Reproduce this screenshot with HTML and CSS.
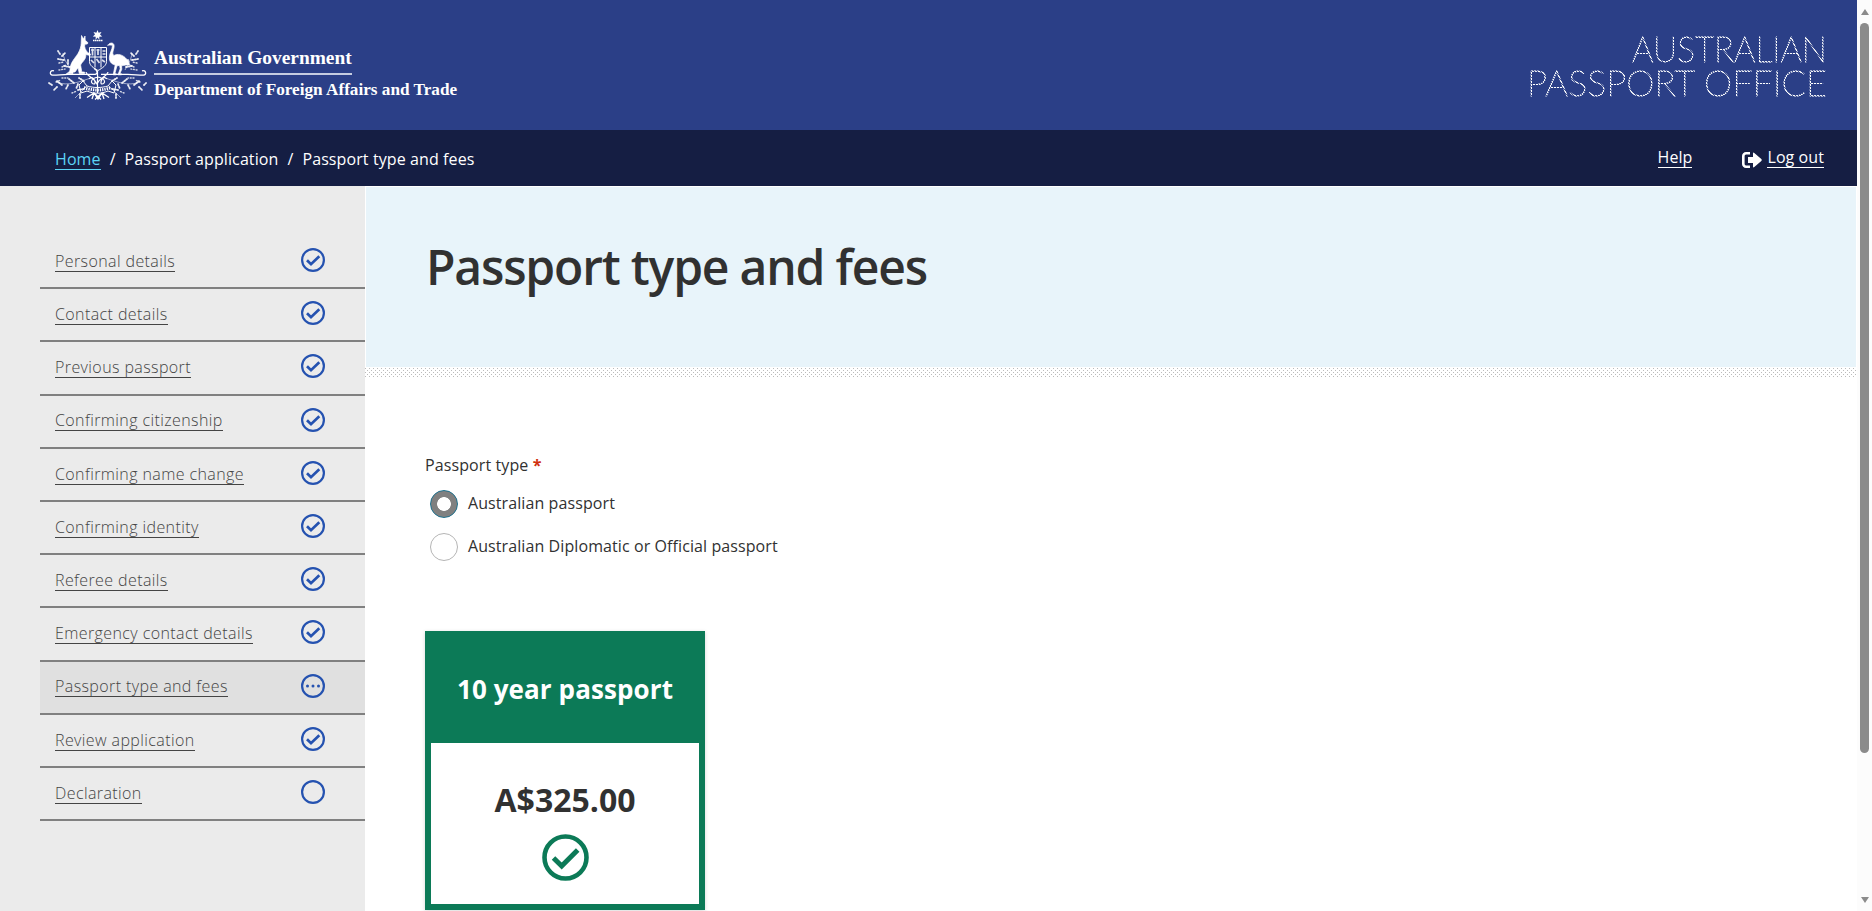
FILE: index.html
```html
<!DOCTYPE html>
<html lang="en">
<head>
<meta charset="utf-8">
<title>Passport type and fees</title>
<link rel="stylesheet" href="styles.css">
</head>
<body>
<svg class="defs" width="0" height="0" aria-hidden="true">
  <symbol id="done" viewBox="0 0 24 24"><circle cx="12" cy="12" r="10.9"/><path stroke-width="2.700" d="M6 12.200l4 4 8.300-8"/></symbol>
  <symbol id="todo" viewBox="0 0 24 24"><circle cx="12" cy="12" r="10.9"/></symbol>
  <symbol id="doing" viewBox="0 0 24 24"><circle cx="12" cy="12" r="10.9"/><g fill="currentColor" stroke="none"><circle cx="6.5" cy="12" r="1.5"/><circle cx="12" cy="12" r="1.5"/><circle cx="17.5" cy="12" r="1.5"/></g></symbol>
</svg>
<div class="page">
  <header class="banner">
    <div class="crest-group">
      <svg class="crest" viewBox="0 0 105 80" width="105" height="80" fill="none" stroke="#fff">
        <path fill="#fff" stroke="none" d="M52.500 5l1.100 2.700 2.900-.6-1.500 2.500 2.200 1.900-2.900.3.100 2.900-1.900-2.200-1.900 2.200.1-2.900-2.900-.3 2.200-1.900-1.500-2.500 2.900.6z"/>
        <path d="M48 15.600h9.500" stroke-width="1.500" stroke-dasharray="1.600 .4"/>
        <path fill="#fff" stroke="#fff" stroke-width=".7" d="M36.500 10.500l2 3.500 1.500-3 .2 4.200 2.800 2.600-.7 1.200-2.500.2c-.8 3.200 1 5.800 2.800 8.300l3 1.600-.5 1.400-4.300-1c.5 5-3.500 7-5.200 10.500l1.200 7h2.700v1.500h-5.200l-1.300-5.800-3 4.300h-2v1.500H21.500c2.300-1 3.600-2 3.800-5.500.4-6 5-10 7.700-14.500 2-3.400 3.100-7 3.200-10.300z"/>
        <path fill="#fff" stroke="#fff" stroke-width=".7" d="M62.500 20.300c1.300-.1 1.400-2.400 4-2.300 2.800.2 3 3 2.300 5.500-.8 3.300-1.900 5.600.2 7 3.500-2.300 9-.8 12.500 3.500 2 2.400 3.200 4.700 3 6.200-3.500-.6-5 .3-8 .6l.3 3.400-2 4.600h1.700v1h-3.500l2.200-6-.6-3.400-2.600.4-2.200 8h1.400v1h-3l2-9.800c-4-1-6-3.600-5.800-7.700.1-4.200 3-8 3-11.300 0-1.200-1.700-1-4.900-.7z"/>
        <path d="M44.500 22.500h17v14c0 4-4 6.500-8.500 9-4.500-2.500-8.500-5-8.500-9zM50 22.500v20M56 22.500v20M44.500 32h17" stroke-width="1"/>
        <path d="M46 25h3m-1.500-1.500v7M51.500 25h3m-1.500-1v6M57.500 26h3M57.500 29h3M46 35l3 3m2.500-4l3 4m2.500-3l3 2" stroke-width="1.700" opacity=".85"/>
        <path d="M9 45.800c-4-1.200-5 4-1.500 4.400C12 50.400 17 49.300 23 49.300h27c3-.3 3-4-1-6m7 6h27c6 0 11 1.100 15.500.9 3.500-.4 2.500-5.600-1.500-4.400" stroke-width="1.300"/>
        <path d="M26 45c-3-6-7-9-8-17M80 45c3-6 6-9 7-17M46 53c-10 3-23 9-35 4M60 53c10 3 23 9 35 4M42 61c-5 5-9 9-12 12M64 61c5 5 9 9 12 12" stroke-width=".7" opacity=".8"/>
        <path d="M25 42l-6-1m4-2v-5m-4 1l-6-1m4-3l3-3m-5 1l-2-3M81 42l6-1m-4-2v-5m4 1l6-1m-4-3l-3-3m5 1l2-3M39 56l-5-3m-1 6l-2 5m-2-6l-5-4m-1 6l-2 4m-4-4l-5-4m0 6l-3 3m-2-5l-3-2M67 56l5-3m1 6l2 5m2-6l5-4m1 6l2 4m4-4l5-4m0 6l3 3m2-5l2-2M39 64l-6 1m2 4v5M67 64l6 1m-2 4v5" stroke-width="1.800" stroke-linecap="round" stroke-dasharray="1.300 1.500" opacity=".9"/>
        <path d="M14 38l5-1m-2 5l4-2m-7 5l6-1M92 38l-5-1m2 5l-4-2m7 5l-6-1M17 53l6 0m-12 4l5-2M89 53l-6 0m12 4l-5-2M27 68l5-2m47 2l-5-2" stroke-width="1.400" stroke-linecap="round" stroke-dasharray="1 1.800" opacity=".8"/>
        <path d="M41 47c1 5 8 5 11 12 3-7 10-7 11-12M52.500 46v22M44 54c4-5 8 5 5 5s-5-5 4-7c9 2 7 7 4 7s1-10 5-5" stroke-width="1.200"/>
        <path d="M34 60l4-4 4 5c7 2 14 2 21 0l4-5 4 4-2 8-6-2c-7 3-14 3-21 0l-6 2z" stroke-width="1"/>
        <path d="M39 62.500l3 1c7 2 14 2 21 0l3-1" stroke-width="3" stroke-dasharray="1.300 1"/>
        <path d="M42 72.500l7-4.500 4 6 4-6 7 4.500M47 74l2-6 7 6.500m3-.5l-2-6-7 6.500" stroke-width="1.300"/>
      </svg>
      <div class="dept"><span class="gov">Australian Government</span><span class="dfat">Department of Foreign Affairs and Trade</span></div>
    </div>
    <svg class="office" width="308" height="96" viewBox="0 0 308 96" role="img">
      <text x="105" y="50" textLength="195" lengthAdjust="spacingAndGlyphs">AUSTRALIAN</text>
      <text x="0" y="83.500" textLength="300" lengthAdjust="spacingAndGlyphs">PASSPORT OFFICE</text>
    </svg>
  </header>
  <nav class="crumbs">
    <div class="trail"><a href="#">Home</a><span>/</span><span>Passport application</span><span>/</span><span>Passport type and fees</span></div>
    <div class="tools"><a href="#">Help</a><span class="logout"><svg width="20" height="16" viewBox="0 0 20 16"><path d="M8 1.300H4A2.700 2.700 0 0 0 1.300 4v8A2.700 2.700 0 0 0 4 14.700h4" fill="none" stroke="#fff" stroke-width="2.600"/><path d="M6 5h5V1.500Q11 0 12.300 1l7 6q.9 1 0 2l-7 6Q11 16 11 14.500V11H6z" fill="#fff"/></svg><a href="#">Log out</a></span></div>
  </nav>
  <div class="columns">
    <aside class="side">
      <ul class="steps">
        <li><a href="#">Personal details</a><svg><use href="#done"/></svg></li>
        <li><a href="#">Contact details</a><svg><use href="#done"/></svg></li>
        <li><a href="#">Previous passport</a><svg><use href="#done"/></svg></li>
        <li><a href="#">Confirming citizenship</a><svg><use href="#done"/></svg></li>
        <li><a href="#">Confirming name change</a><svg><use href="#done"/></svg></li>
        <li><a href="#">Confirming identity</a><svg><use href="#done"/></svg></li>
        <li><a href="#">Referee details</a><svg><use href="#done"/></svg></li>
        <li><a href="#">Emergency contact details</a><svg><use href="#done"/></svg></li>
        <li class="current"><a href="#">Passport type and fees</a><svg><use href="#doing"/></svg></li>
        <li><a href="#">Review application</a><svg><use href="#done"/></svg></li>
        <li><a href="#">Declaration</a><svg><use href="#todo"/></svg></li>
      </ul>
    </aside>
    <main class="main">
      <div class="hero"><h1>Passport type and fees</h1></div>
      <div class="dots"></div>
      <form class="form">
        <div class="legend">Passport type <b>*</b></div>
        <label class="option"><span class="radio on"></span>Australian passport</label>
        <label class="option"><span class="radio"></span>Australian Diplomatic or Official passport</label>
        <div class="card">
          <h2>10 year passport</h2>
          <div class="price"><strong>A$325.00</strong>
            <svg width="47" height="47" viewBox="0 0 47 47" fill="none" stroke="#0c7a57"><circle cx="23.500" cy="23.500" r="21" stroke-width="4.600"/><path d="M11.500 24l8.200 8 16-16" stroke-width="5"/></svg>
          </div>
        </div>
      </form>
    </main>
  </div>
</div>
<div class="scroll"><i class="up"></i><i class="thumb"></i><i class="down"></i></div>
</body>
</html>
```
FILE: styles.css
```css
* { box-sizing: border-box; }
body { margin: 0; display: flex; width: 1872px; height: 911px; overflow: hidden; background: #fff; color: #313131; font-family: "Open Sans", sans-serif; font-size: 16px; }
.defs { position: absolute; }
.page { width: 1857px; height: 911px; display: flex; flex-direction: column; }

.banner { height: 130px; flex: none; background: #2b3f87; display: flex; justify-content: space-between; padding: 12px 22px 0 45px; }
.crest-group { display: flex; padding-top: 13px; }
.dept { padding-top: 22px; margin-left: 4px; color: #fff; font-family: "Liberation Serif", serif; font-weight: 700; white-space: nowrap; display: flex; flex-direction: column; align-items: flex-start; }
.gov { font-size: 19.400px; line-height: 22px; height: 28px; border-bottom: 2px solid #c5cce0; }
.dfat { font-size: 17.200px; line-height: 20px; padding-top: 5px; }
.office { fill: #fff; stroke: #fff; stroke-width: .8; font-family: Lato, sans-serif; font-weight: 100; font-size: 36px; -webkit-mask: repeating-linear-gradient(45deg, #000 0 1.100px, rgba(0,0,0,.12) 1.100px 2.121px); mask: repeating-linear-gradient(45deg, #000 0 1.100px, rgba(0,0,0,.12) 1.100px 2.121px); }

.crumbs { height: 56px; flex: none; background: #151e43; color: #fff; display: flex; justify-content: space-between; padding: 0 33px 0 55px; }
.crumbs a { color: #fff; text-decoration: none; border-bottom: 1px solid; line-height: 19px; }
.trail { display: flex; align-items: center; gap: 9px; padding-top: 2px; letter-spacing: .1px; }
.trail a { color: #5dd5f5; padding-top: 1px; }
.tools { display: flex; align-items: center; gap: 50px; letter-spacing: .08px; }
.logout { display: flex; align-items: center; gap: 5px; }
.logout svg { margin-top: 3px; }

.columns { display: flex; flex: 1; }
.side { width: 365px; background: #ebebeb; padding: 50px 0 0 40px; }
.steps { list-style: none; margin: 0; padding: 0; }
.steps li { height: 53.200px; border-bottom: 2px solid #808080; padding: 0 40px 0 15px; display: flex; align-items: center; justify-content: space-between; }
.steps a { color: #444; font-weight: 300; letter-spacing: .4px; text-decoration: none; border-bottom: 1px solid #444; line-height: 19px; padding-top: .5px; }
.steps svg { width: 24px; height: 24px; margin-top: -3px; fill: none; stroke: #2552b0; color: #2552b0; stroke-width: 2.200; }
.current { background: #e0e0e0; }

.main { flex: 1; padding-top: 1px; }
.hero { height: 180px; margin: 0 1px; background: #e8f4fa; padding: 44px 60px 0; }
h1 { margin: 0; font-size: 48px; font-weight: 600; line-height: 72px; letter-spacing: -1.180px; }
.dots {
  height: 10px;
  margin-top: 1px;
  background:
    conic-gradient(from 270deg at 1px 1px, #bbb 90deg, transparent 0) 0 0 / 4px 4px,
    conic-gradient(from 270deg at 1px 1px, #bbb 90deg, transparent 0) 2px 2px / 4px 4px;
}
.form { padding: 75px 60px 0; }
.legend { line-height: 24px; margin-bottom: 4px; letter-spacing: .1px; }
.legend b { color: #d03010; }
.option { display: flex; align-items: center; height: 43px; padding-left: 5px; gap: 10px; letter-spacing: .09px; }
.radio { width: 28px; height: 28px; border: 1px solid #b5b5b5; border-radius: 50%; margin-top: 3px; }
.on { border-color: #1c6f8c; background: radial-gradient(circle, #fff 6.500px, #808080 7.200px); }
.card { width: 280px; height: 279px; margin-top: 64px; border: 6px solid #0c7a57; border-top: 0; box-shadow: 0 1px 4px rgba(0,0,0,.16); text-align: center; }
h2 { margin: 0; background: #0c7a57; color: #fff; height: 112px; line-height: 117px; font-size: 26px; font-weight: 700; letter-spacing: .1px; }
.price { display: flex; flex-direction: column; align-items: center; padding-top: 35px; }
.price strong { font-size: 32px; line-height: 44px; }
.price svg { margin-top: 12px; }

.scroll { width: 15px; height: 911px; background: #fcfcfc; display: flex; flex-direction: column; align-items: center; padding: 9px 0 8px; }
.up, .down { border: 4px solid transparent; width: 0; height: 0; }
.thumb { width: 9px; height: 730px; border-radius: 5px; background: #8b8b8b; margin-top: 8px; }
.up { border-bottom: 6px solid #8b8b8b; border-top: 0; }
.down { border-top: 6px solid #8b8b8b; border-bottom: 0; margin-top: auto; }
```
